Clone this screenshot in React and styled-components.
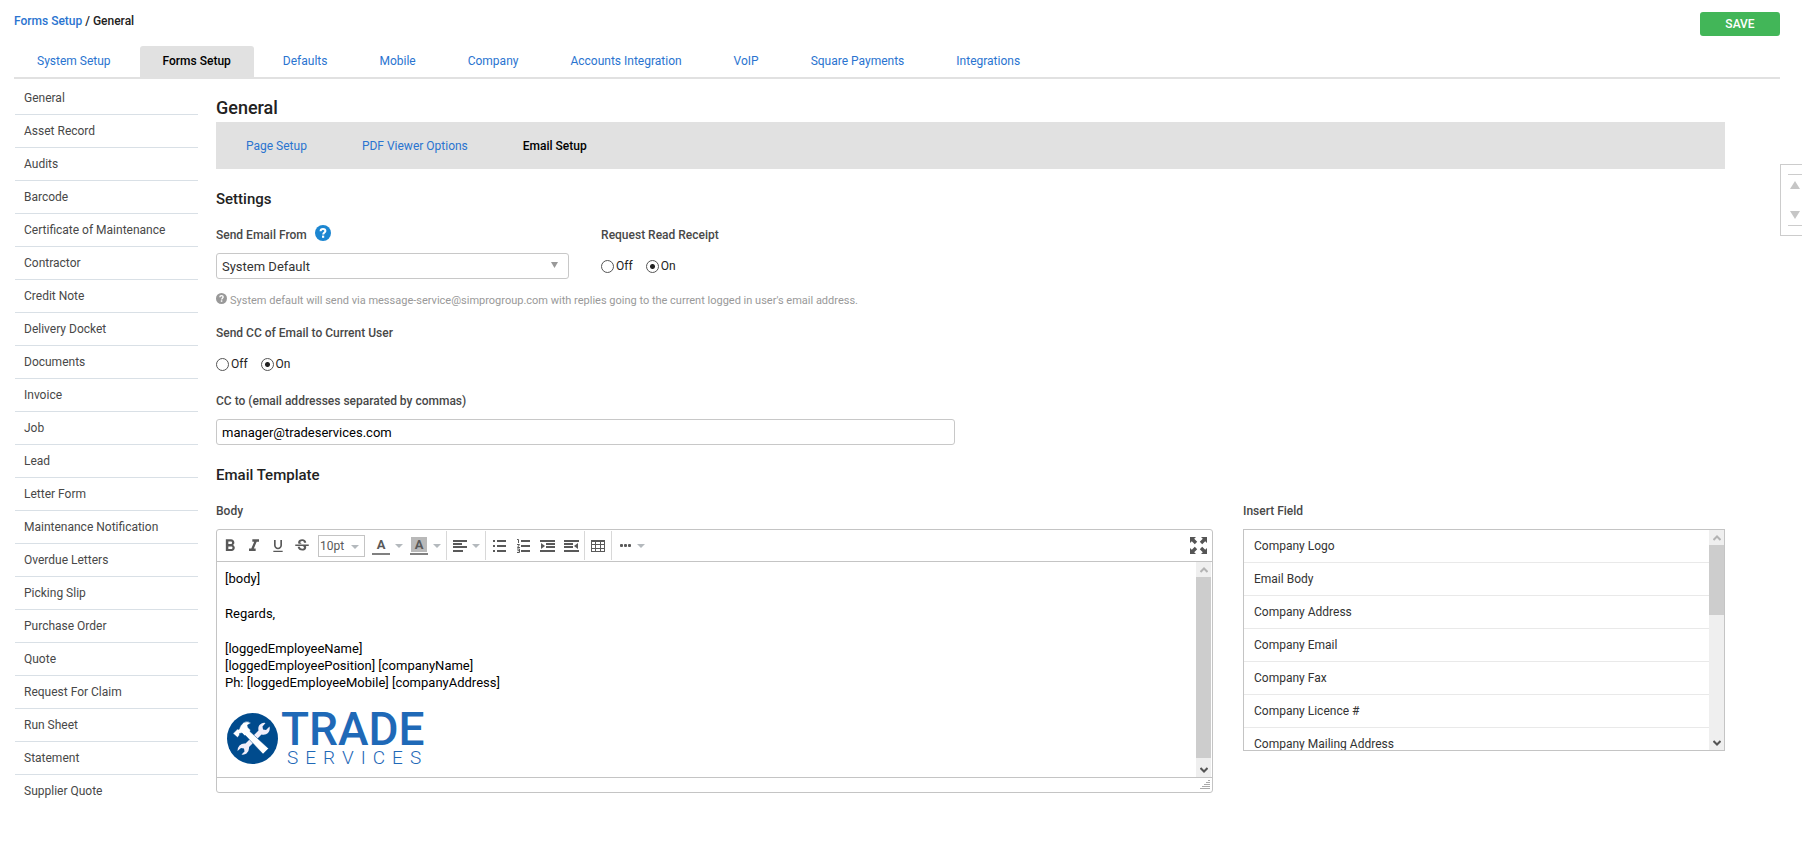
import { useState } from 'react';
import styled, { createGlobalStyle } from 'styled-components';
import {
  MdFormatBold,
  MdFormatItalic,
  MdFormatUnderlined,
  MdStrikethroughS
} from 'react-icons/md';

const TABS = [
  'System Setup',
  'Forms Setup',
  'Defaults',
  'Mobile',
  'Company',
  'Accounts Integration',
  'VoIP',
  'Square Payments',
  'Integrations'
];

const MENU = [
  'General',
  'Asset Record',
  'Audits',
  'Barcode',
  'Certificate of Maintenance',
  'Contractor',
  'Credit Note',
  'Delivery Docket',
  'Documents',
  'Invoice',
  'Job',
  'Lead',
  'Letter Form',
  'Maintenance Notification',
  'Overdue Letters',
  'Picking Slip',
  'Purchase Order',
  'Quote',
  'Request For Claim',
  'Run Sheet',
  'Statement',
  'Supplier Quote'
];

const SUB_TABS = ['Page Setup', 'PDF Viewer Options', 'Email Setup'];

const FIELDS = [
  'Company Logo',
  'Email Body',
  'Company Address',
  'Company Email',
  'Company Fax',
  'Company Licence #',
  'Company Mailing Address'
];

const Triangle = ({ up, width = 8, height = 4, color = '#b4b9bd' }) => (
  <svg width={width} height={height} viewBox="0 0 10 10" preserveAspectRatio="none">
    <path d={up ? 'M0 10L5 0L10 10Z' : 'M0 0H10L5 10Z'} fill={color} />
  </svg>
);

const QuestionIcon = ({ size, color }) => (
  <svg width={size} height={size} viewBox="0 0 16 16">
    <circle cx="8" cy="8" r="8" fill={color} />
    <path
      d="M5.6 6.2C5.6 4.6 6.6 3.9 8 3.9C9.5 3.9 10.4 4.7 10.4 5.9C10.4 7.5 8.2 7.6 8.2 9.5"
      fill="none"
      stroke="#fff"
      strokeWidth="2"
    />
    <rect x="7" y="10.6" width="2.2" height="2.2" fill="#fff" />
  </svg>
);

const AlignLeftIcon = () => (
  <svg width="14" height="12" viewBox="0 0 14 12" fill="#595959" shapeRendering="crispEdges">
    <rect width="14" height="2" />
    <rect y="3" width="9" height="2" />
    <rect y="6" width="14" height="2" />
    <rect y="10" width="10" height="2" />
  </svg>
);

const BulletListIcon = () => (
  <svg width="13" height="12" viewBox="0 0 13 12" fill="#595959" shapeRendering="crispEdges">
    <rect y="0" width="2" height="2" />
    <rect x="4" y="0" width="9" height="2" />
    <rect y="5" width="2" height="2" />
    <rect x="4" y="5" width="9" height="2" />
    <rect y="10" width="2" height="2" />
    <rect x="4" y="10" width="9" height="2" />
  </svg>
);

const NumberListIcon = () => (
  <svg width="13" height="14" viewBox="0 0 13 14" fill="#595959">
    <rect x="4" y="1" width="9" height="2" />
    <rect x="4" y="6" width="9" height="2" />
    <rect x="4" y="11" width="9" height="2" />
    <path
      d="M0 0.5H1.500V4M0 5.500H2.500L0.500 8.500H3M0 10H2.500V13.500H0M0.500 11.700H2.500"
      fill="none"
      stroke="#595959"
    />
  </svg>
);

const IndentIcon = ({ outdent }) => (
  <svg width="15" height="12" viewBox="0 0 15 12" fill="#595959">
    <rect width="15" height="2" />
    <rect x={outdent ? 0 : 6} y="3" width="9" height="2" />
    <rect x={outdent ? 0 : 6} y="6" width="9" height="2" />
    <rect y="10" width="15" height="2" />
    <path d={outdent ? 'M14 3V9L10 6Z' : 'M1 3V9L5 6Z'} />
  </svg>
);

const TableIcon = () => (
  <svg width="14" height="12" viewBox="0 0 14 12" fill="none" stroke="#595959">
    <rect x="0.5" y="0.5" width="13" height="11" />
    <path d="M0 1H14" strokeWidth="2" />
    <path d="M0 4.5H14M0 8.5H14M4.5 0V12M9.5 0V12" />
  </svg>
);

const DotsIcon = () => (
  <svg width="11" height="3" viewBox="0 0 11 3" fill="#595959">
    <rect width="3" height="3" rx="1" />
    <rect x="4" width="3" height="3" rx="1" />
    <rect x="8" width="3" height="3" rx="1" />
  </svg>
);

const ExpandIcon = () => (
  <svg width="17" height="17" viewBox="0 0 17 17" fill="#555">
    <path d="M0 0H6L4.200 1.800L7.200 4.800L4.800 7.200L1.800 4.200L0 6Z" />
    <path d="M17 0V6L15.200 4.200L12.200 7.200L9.800 4.800L12.800 1.800L11 0Z" />
    <path d="M0 17V11L1.800 12.800L4.800 9.800L7.200 12.200L4.200 15.200L6 17Z" />
    <path d="M17 17H11L12.800 15.200L9.800 12.200L12.200 9.800L15.200 12.800L17 11Z" />
  </svg>
);

const GripIcon = () => (
  <svg width="10" height="10" viewBox="0 0 10 10" fill="#aaa" shapeRendering="crispEdges">
    <path d="M8 0h2v1h-2zM6 2h4v1h-4zM4 4h6v1h-6zM2 6h8v1h-8zM0 8h10v1h-10z" />
  </svg>
);

const Chevron = ({ up }) => (
  <svg width="8" height="6" viewBox="0 0 8 6" fill="none">
    <path
      d={up ? 'M0.500 5L4 1.500L7.500 5' : 'M0.500 1L4 4.500L7.500 1'}
      stroke={up ? '#b3b3b3' : '#555'}
      strokeWidth="2"
    />
  </svg>
);

const Emblem = () => (
  <svg width="51" height="51" viewBox="0 0 51 51">
    <circle cx="25.500" cy="25.500" r="25.500" fill="#004b8d" />
    <path
      d="M18.500 30.500L31.500 17.500Q30.500 12.500 34.500 10.500Q36.500 9.500 38.500 10L35.500 13.500L36 16.500L39 17L42.500 13.500Q43.500 17 41 20Q38.500 22.500 34.500 21.500L22 34Q22.500 38 19.500 40.500Q17.500 42 14.500 41.500L17.500 38.500L17 35.500L14 35L10.500 38Q10.500 34.500 12.500 32.500Q15 30 18.500 30.500Z"
      fill="#f1eefa"
    />
    <path
      d="M6 20.500L10.500 16L12 16.500Q13 12.500 16.500 9.500Q20 7.500 24 10L20.500 12L21 14.500L23.500 17L23 18.500L41.500 35.500L36 41L18.500 22.500L17.500 22.500L15 20L12.500 20.500L12.500 22L10.500 24.500Z"
      fill="#fff"
      stroke="#004b8d"
      strokeWidth="0.5"
    />
  </svg>
);

const ScrollBar = ({ thumb, inset }) => (
  <ScrollTrack aria-hidden="true" $inset={inset}>
    <ScrollEnd>
      <Chevron up />
    </ScrollEnd>
    <ScrollThumb $size={thumb} />
    <ScrollRest $size={100 - thumb} />
    <ScrollEnd>
      <Chevron />
    </ScrollEnd>
  </ScrollTrack>
);

const YesNo = ({ name, label }) => {
  const [value, setValue] = useState('On');

  return (
    <RadioRow role="radiogroup" aria-label={label}>
      {['Off', 'On'].map((option) => (
        <RadioLabel key={option}>
          <Radio
            type="radio"
            name={name}
            checked={value === option}
            onChange={() => setValue(option)}
          />
          {option}
        </RadioLabel>
      ))}
    </RadioRow>
  );
};

const Toolbar = () => (
  <ToolbarRow role="toolbar" aria-label="Formatting">
    <TextTools>
      <ToolButton aria-label="Bold">
        <MdFormatBold size={20} />
      </ToolButton>
      <ToolButton aria-label="Italic">
        <MdFormatItalic size={20} />
      </ToolButton>
      <ToolButton aria-label="Underline">
        <MdFormatUnderlined size={16} />
      </ToolButton>
      <ToolButton aria-label="Strikethrough">
        <MdStrikethroughS size={18} />
      </ToolButton>
      <SizeBox>
        <SizeSelect aria-label="Font size" defaultValue="10pt">
          <option>8pt</option>
          <option>10pt</option>
          <option>12pt</option>
        </SizeSelect>
        <SizeArrow>
          <Triangle />
        </SizeArrow>
      </SizeBox>
      <ToolButton aria-label="Text color">
        <Swatch>A</Swatch>
      </ToolButton>
      <CaretButton aria-label="Text color options">
        <Triangle />
      </CaretButton>
      <ToolButton aria-label="Background color" $spaced>
        <Swatch $filled>A</Swatch>
      </ToolButton>
      <CaretButton aria-label="Background color options">
        <Triangle />
      </CaretButton>
    </TextTools>
    <ToolGroup $pad={3}>
      <ToolButton aria-label="Align" $narrow>
        <AlignLeftIcon />
      </ToolButton>
      <CaretButton aria-label="Align options">
        <Triangle />
      </CaretButton>
    </ToolGroup>
    <ToolGroup $pad={1}>
      <ToolButton aria-label="Bullet list">
        <BulletListIcon />
      </ToolButton>
      <ToolButton aria-label="Numbered list">
        <NumberListIcon />
      </ToolButton>
      <ToolButton aria-label="Increase indent">
        <IndentIcon />
      </ToolButton>
      <ToolButton aria-label="Decrease indent">
        <IndentIcon outdent />
      </ToolButton>
    </ToolGroup>
    <ToolGroup $pad={1}>
      <ToolButton aria-label="Table">
        <TableIcon />
      </ToolButton>
    </ToolGroup>
    <ToolGroup $pad={3} $last>
      <ToolButton aria-label="More" $narrow>
        <DotsIcon />
      </ToolButton>
      <CaretButton aria-label="More options">
        <Triangle />
      </CaretButton>
    </ToolGroup>
    <ToolButton aria-label="Full screen">
      <ExpandIcon />
    </ToolButton>
  </ToolbarRow>
);

export default function App() {
  const [ccTo, setCcTo] = useState('manager@tradeservices.com');

  return (
    <>
      <GlobalStyle />
      <Page>
        <TopBar>
          <Breadcrumb aria-label="Breadcrumb">
            <Link href="#forms-setup">Forms Setup</Link> / General
          </Breadcrumb>
          <SaveButton type="button">SAVE</SaveButton>
        </TopBar>
        <TabBar>
          {TABS.map((tab) => (
            <Tab key={tab} href="#tab" $active={tab === 'Forms Setup'}>
              {tab}
            </Tab>
          ))}
        </TabBar>
        <Columns>
          <SideMenu>
            {MENU.map((item) => (
              <MenuItem key={item}>
                <MenuLink href="#menu">{item}</MenuLink>
              </MenuItem>
            ))}
          </SideMenu>
          <Main>
            <Title>General</Title>
            <SubTabBar>
              {SUB_TABS.map((tab) => (
                <SubTab key={tab} href="#subtab" $active={tab === 'Email Setup'}>
                  {tab}
                </SubTab>
              ))}
            </SubTabBar>

            <SectionTitle>Settings</SectionTitle>
            <FieldRow>
              <FromField>
                <LabelRow>
                  <Label htmlFor="send-from">Send Email From</Label>
                  <QuestionIcon size={16} color="#1c86d1" />
                </LabelRow>
                <SelectBox>
                  <Select id="send-from">
                    <option>System Default</option>
                  </Select>
                  <SelectArrow>
                    <Triangle width={7} height={6} color="#999" />
                  </SelectArrow>
                </SelectBox>
              </FromField>
              <div>
                <LabelRow>
                  <Label as="span">Request Read Receipt</Label>
                </LabelRow>
                <YesNo name="read-receipt" label="Request Read Receipt" />
              </div>
            </FieldRow>
            <Hint>
              <QuestionIcon size={11} color="#999" />
              System default will send via message-service@simprogroup.com with
              replies going to the current logged in user's email address.
            </Hint>
            <Field>
              <LabelRow>
                <Label as="span">Send CC of Email to Current User</Label>
              </LabelRow>
              <YesNo name="send-cc" label="Send CC of Email to Current User" />
            </Field>
            <Field>
              <LabelRow>
                <Label htmlFor="cc-to">
                  CC to (email addresses separated by commas)
                </Label>
              </LabelRow>
              <TextInput
                id="cc-to"
                type="text"
                value={ccTo}
                onChange={(e) => setCcTo(e.target.value)}
              />
            </Field>

            <SectionTitle>Email Template</SectionTitle>
            <TemplateRow>
              <BodyColumn>
                <LabelRow>
                  <Label as="span" id="body-label">
                    Body
                  </Label>
                </LabelRow>
                <Editor>
                  <Toolbar />
                  <EditorBody>
                    <EditorText
                      role="textbox"
                      aria-labelledby="body-label"
                      contentEditable
                      suppressContentEditableWarning
                    >
                      <p>[body]</p>
                      <p>Regards,</p>
                      <p>
                        [loggedEmployeeName]
                        <br />
                        [loggedEmployeePosition] [companyName]
                        <br />
                        Ph: [loggedEmployeeMobile] [companyAddress]
                      </p>
                      <Logo>
                        <Emblem />
                        <LogoText>
                          <LogoName>TRADE</LogoName>
                          <LogoTag>SERVICES</LogoTag>
                        </LogoText>
                      </Logo>
                    </EditorText>
                    <ScrollBar thumb={98} inset />
                  </EditorBody>
                  <StatusBar>
                    <GripIcon />
                  </StatusBar>
                </Editor>
              </BodyColumn>
              <InsertColumn>
                <LabelRow>
                  <Label as="span">Insert Field</Label>
                </LabelRow>
                <InsertBox>
                  <InsertList>
                    {FIELDS.map((field) => (
                      <InsertItem key={field}>{field}</InsertItem>
                    ))}
                  </InsertList>
                  <ScrollBar thumb={37} />
                </InsertBox>
              </InsertColumn>
            </TemplateRow>
          </Main>
        </Columns>
        <PageJump>
          <JumpInner>
            <JumpButton type="button" aria-label="Scroll to top">
              <Triangle up width={10} height={8} color="#c6c6c6" />
            </JumpButton>
            <JumpButton type="button" aria-label="Scroll to bottom">
              <Triangle width={10} height={8} color="#c6c6c6" />
            </JumpButton>
          </JumpInner>
        </PageJump>
      </Page>
    </>
  );
}

const GlobalStyle = createGlobalStyle`
  * {
    box-sizing: border-box;
  }
  body {
    margin: 0;
    background: #fff;
    color: #222;
    font-family: Roboto, "Liberation Sans", sans-serif;
    font-size: 12px;
    line-height: 16px;
  }
  button, input, select {
    font-family: inherit;
  }
  svg {
    display: block;
    flex: none;
  }
`;

const Page = styled.div`
  padding: 12px 22px 48px 14px;
`;

const TopBar = styled.header`
  display: flex;
  align-items: flex-start;
  justify-content: space-between;
`;

const Breadcrumb = styled.nav`
  padding-top: 1px;
  font-weight: 500;
`;

const Link = styled.a`
  color: #2a74d0;
  text-decoration: none;
`;

const SaveButton = styled.button`
  width: 80px;
  height: 24px;
  padding: 0;
  border: 0;
  border-radius: 3px;
  background: #42b658;
  color: #fff;
  font-size: 12px;
  font-weight: 500;
  cursor: pointer;
`;

const TabBar = styled.nav`
  display: flex;
  gap: 6px;
  margin-top: 10px;
  border-bottom: 2px solid #e1e1e1;
`;

const Tab = styled.a`
  padding: 7px 23px 8px;
  border-radius: 3px 3px 0 0;
  background: ${(props) => (props.$active ? '#e1e1e1' : 'transparent')};
  color: ${(props) => (props.$active ? '#000' : '#2a74d0')};
  font-weight: ${(props) => (props.$active ? 500 : 400)};
  text-decoration: none;
`;

const Columns = styled.div`
  display: flex;
`;

const SideMenu = styled.ul`
  flex: 0 0 183px;
  margin: 3px 18px 0 1px;
  padding: 0;
  list-style: none;
`;

const MenuItem = styled.li`
  border-bottom: 1px solid #d9e0e6;
  &:last-child {
    border-bottom: 0;
  }
`;

const MenuLink = styled.a`
  display: block;
  padding: 8px 9px;
  color: #484848;
  text-decoration: none;
`;

const Main = styled.main`
  flex: 1;
  min-width: 0;
  padding: 17px 55px 0 0;
`;

const Title = styled.h1`
  margin: 0 0 2px;
  font-size: 18px;
  font-weight: 500;
  line-height: 24px;
`;

const SubTabBar = styled.nav`
  display: flex;
  gap: 55px;
  padding: 16px 30px 15px;
  background: #e1e1e1;
`;

const SubTab = styled.a`
  color: ${(props) => (props.$active ? '#000' : '#2a74d0')};
  font-weight: ${(props) => (props.$active ? 500 : 400)};
  text-decoration: none;
`;

const SectionTitle = styled.h2`
  margin: 20px 0 16px;
  font-size: 15px;
  font-weight: 500;
  line-height: 20px;
`;

const FieldRow = styled.div`
  display: flex;
  gap: 32px;
`;

const FromField = styled.div`
  width: 23.4%;
`;

const Field = styled.div`
  margin-top: 14px;
`;

const LabelRow = styled.div`
  display: flex;
  gap: 8px;
  margin-bottom: 8px;
`;

const Label = styled.label`
  color: #484848;
  font-weight: 500;
  line-height: 20px;
`;

const SelectBox = styled.div`
  position: relative;
`;

const Select = styled.select`
  appearance: none;
  display: block;
  width: 100%;
  height: 26px;
  padding: 0 24px 0 5px;
  border: 1px solid #c8c8c8;
  border-radius: 3px;
  background: #fff;
  color: #333;
  font-size: 13px;
`;

const SelectArrow = styled.span`
  position: absolute;
  top: 9px;
  right: 11px;
  pointer-events: none;
`;

const RadioRow = styled.div`
  display: flex;
  align-items: center;
  gap: 13px;
  height: 26px;
`;

const RadioLabel = styled.label`
  display: flex;
  align-items: center;
  gap: 2px;
`;

const Radio = styled.input`
  appearance: none;
  width: 13px;
  height: 13px;
  margin: 0;
  border: 1px solid #555;
  border-radius: 50%;
  background: ${(props) =>
    props.checked ? 'radial-gradient(circle, #222 0 2px, #fff 3px)' : '#fff'};
`;

const Hint = styled.p`
  display: flex;
  gap: 3px;
  margin: 14px 0 0;
  color: #999;
  font-size: 11px;
`;

const TextInput = styled.input`
  display: block;
  width: 49%;
  height: 26px;
  padding: 0 5px;
  border: 1px solid #c8c8c8;
  border-radius: 3px;
  color: #000;
  font-size: 13px;
`;

const TemplateRow = styled.div`
  display: flex;
  align-items: flex-start;
  gap: 30px;
`;

const BodyColumn = styled.section`
  flex: 997;
`;

const InsertColumn = styled.section`
  flex: 482;
`;

const Editor = styled.div`
  border: 1px solid #c4c4c4;
  border-radius: 3px;
`;

const ToolbarRow = styled.div`
  display: flex;
  align-items: center;
  padding-right: 2px;
  border-bottom: 1px solid #c4c4c4;
`;

const ToolGroup = styled.div`
  display: flex;
  align-items: center;
  height: 29px;
  margin: 1px 0;
  padding: 0 ${(props) => props.$pad}px;
  border-right: ${(props) => (props.$last ? '0' : '1px solid #d8d8d8')};
  margin-right: ${(props) => (props.$last ? 'auto' : '0')};
`;

const TextTools = styled(ToolGroup)`
  padding: 0 3px 0 1px;
`;

const ToolButton = styled.button`
  display: flex;
  align-items: center;
  justify-content: center;
  width: ${(props) => (props.$narrow ? 20 : 24)}px;
  height: 24px;
  margin-left: ${(props) => (props.$spaced ? 2 : 0)}px;
  padding: 0;
  border: 0;
  background: none;
  color: #595959;
`;

const CaretButton = styled(ToolButton)`
  width: 12px;
`;

const Swatch = styled.span`
  width: 18px;
  padding: 0 1px 1px;
  border-bottom: 2px solid #808080;
  background: ${(props) => (props.$filled ? '#b9b9b9' : 'none')} content-box;
  font-size: 13px;
  font-weight: 700;
`;

const SizeBox = styled.div`
  position: relative;
  margin: 0 4px;
`;

const SizeSelect = styled.select`
  appearance: none;
  display: block;
  width: 47px;
  height: 22px;
  padding: 0 0 0 1px;
  border: 1px solid #c4c4c4;
  border-radius: 0;
  background: #fff;
  color: #595959;
  font-size: 12px;
`;

const SizeArrow = styled.span`
  position: absolute;
  top: 10px;
  right: 6px;
  pointer-events: none;
`;

const EditorBody = styled.div`
  display: flex;
  min-height: 215px;
`;

const EditorText = styled.div`
  flex: 1;
  padding: 8px;
  outline: 0;
  color: #000;
  font-size: 13px;
  line-height: 17px;
  p {
    margin: 0 0 18px;
  }
`;

const Logo = styled.div`
  display: flex;
  gap: 3px;
  padding: 4px 2px 0;
  color: #1f69b7;
`;

const LogoText = styled.div`
  display: flex;
  flex-direction: column;
`;

const LogoName = styled.span`
  font-size: 46px;
  font-weight: 500;
  line-height: 33px;
`;

const LogoTag = styled.span`
  margin: 3px 0 0 6px;
  font-size: 19px;
  font-weight: 300;
  letter-spacing: 7px;
`;

const StatusBar = styled.div`
  display: flex;
  justify-content: flex-end;
  padding: 2px;
  border-top: 1px solid #c4c4c4;
`;

const ScrollTrack = styled.div`
  display: flex;
  flex-direction: column;
  flex: 0 0 15px;
  margin-right: ${(props) => (props.$inset ? 1 : 0)}px;
  background: #efefef;
`;

const ScrollEnd = styled.div`
  display: flex;
  align-items: center;
  justify-content: center;
  height: 15px;
`;

const ScrollThumb = styled.div`
  flex: ${(props) => props.$size};
  background: #cdcdcd;
`;

const ScrollRest = styled.div`
  flex: ${(props) => props.$size};
`;

const InsertBox = styled.div`
  display: flex;
  height: 222px;
  border: 1px solid #c4c4c4;
`;

const InsertList = styled.ul`
  flex: 1;
  margin: 0;
  padding: 0;
  overflow-y: auto;
  scrollbar-width: none;
  list-style: none;
`;

const InsertItem = styled.li`
  padding: 8px 10px;
  border-bottom: 1px solid #e9e9e9;
  color: #333;
`;

const PageJump = styled.aside`
  position: absolute;
  top: 164px;
  right: 0;
  width: 22px;
  padding: 9px 0 9px 7px;
  border: 1px solid #ccc;
  border-right: 0;
  background: #fff;
`;

const JumpInner = styled.div`
  display: flex;
  flex-direction: column;
  justify-content: space-between;
  height: 52px;
  padding: 6px 0 6px 2px;
  border: solid #ccc;
  border-width: 1px 0;
`;

const JumpButton = styled.button`
  padding: 0;
  border: 0;
  background: none;
`;
